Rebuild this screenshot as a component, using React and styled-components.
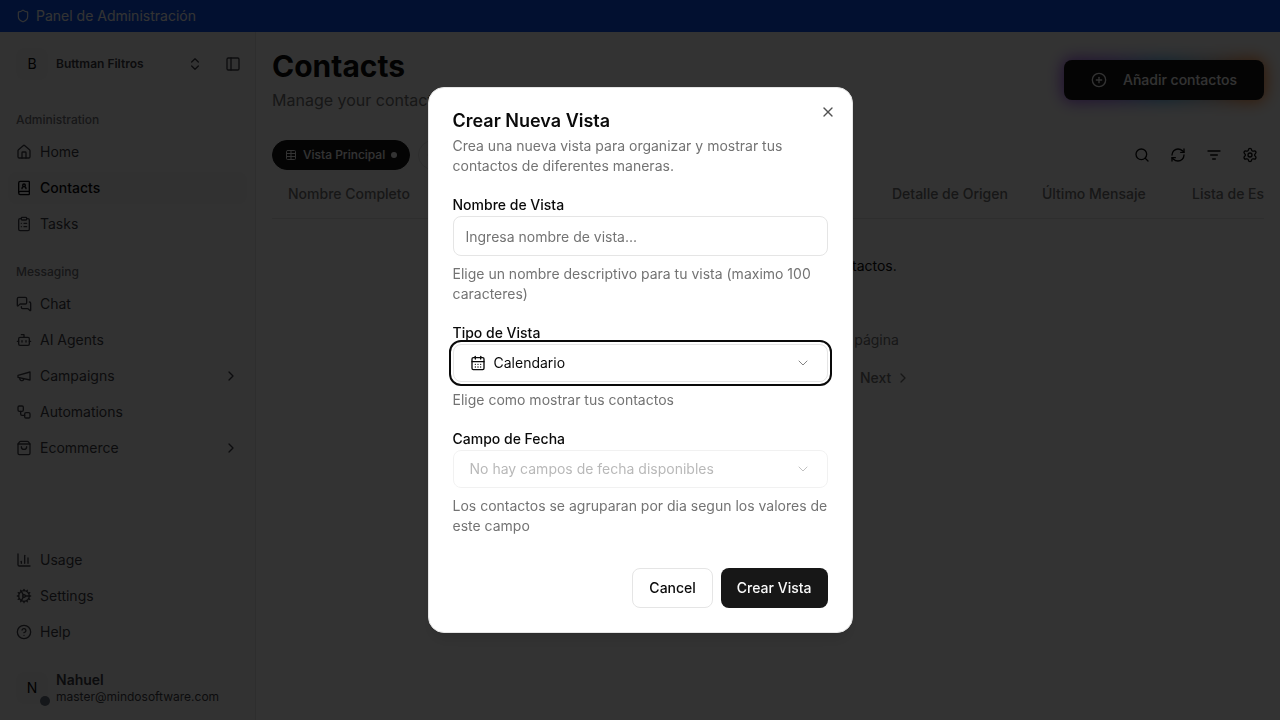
import React from "react";
import styled, { createGlobalStyle } from "styled-components";
import {
  Shield, ChevronsUpDown, PanelLeft, House, BookUser, ClipboardList, MessagesSquare, Bot,
  Workflow, ShoppingBag, ChevronRight, ChevronLeft, ChevronDown, ChartColumn, Cog,
  CircleHelp, CirclePlus, Table as TableIcon, Plus, Search, RefreshCw, Settings, CalendarDays, X,
} from "lucide-react";

const GlobalStyle = createGlobalStyle`
  *, *::before, *::after { box-sizing: border-box; }
  body { margin: 0; background: #fff; color: #0a0a0a; }
  body, button, input, select { font-family: Inter, "Liberation Sans", sans-serif; font-size: 14px; line-height: 20px; }
  h1, h2, p { margin: 0; }
  button { border: 0; background: none; padding: 0; color: inherit; cursor: pointer; }
  a { color: inherit; text-decoration: none; }
  svg { flex: none; display: block; }
`;

const Page = styled.div`
  display: flex;
  flex-direction: column;
  height: 100vh;
  overflow: hidden;
`;

const Banner = styled.header`
  display: flex;
  align-items: center;
  gap: 6px;
  flex: none;
  height: 32px;
  padding: 0 16px;
  background: #0a52f0;
  color: #fff;
`;

const Body = styled.div`
  display: flex;
  flex: 1;
  min-height: 0;
`;

const Sidebar = styled.aside`
  display: flex;
  flex-direction: column;
  flex: none;
  width: 256px;
  background: #fafafa;
  border-right: 1px solid #e5e5e5;
  color: #3f3f46;
`;

const AccountRow = styled.div`
  display: flex;
  align-items: center;
  gap: 8px;
  padding: 8px;
`;

const AccountButton = styled.button`
  display: flex;
  align-items: center;
  gap: 8px;
  flex: 1;
  min-width: 0;
  height: 48px;
  padding: 8px;
  text-align: left;
`;

const Avatar = styled.span`
  position: relative;
  display: flex;
  align-items: center;
  justify-content: center;
  flex: none;
  width: 32px;
  height: 32px;
  border-radius: 8px;
  background: #f5f5f5;
  color: #0a0a0a;
`;

const StatusDot = styled.span`
  position: absolute;
  right: -2px;
  bottom: -2px;
  width: 10px;
  height: 10px;
  border-radius: 50%;
  background: #6a7282;
`;

const AccountName = styled.span`
  flex: 1;
  font-size: 12px;
  font-weight: 600;
`;

const PanelToggle = styled.button`
  display: flex;
  align-items: center;
  justify-content: center;
  width: 28px;
  height: 28px;
`;

const UserText = styled.span`
  display: flex;
  flex-direction: column;
  min-width: 0;
`;

const UserName = styled.span`
  font-weight: 600;
  line-height: 18px;
`;

const UserMail = styled.span`
  font-size: 12px;
  line-height: 16px;
`;

const NavGroup = styled.nav`
  display: flex;
  flex-direction: column;
  gap: 4px;
  padding: 8px;
  margin-top: ${(p) => (p.$last ? "auto" : "0")};
`;

const NavLabel = styled.div`
  height: 28px;
  padding: 0 8px;
  font-size: 12px;
  font-weight: 500;
  line-height: 32px;
  color: #737378;
`;

const NavItem = styled.a`
  display: flex;
  align-items: center;
  gap: 8px;
  height: 32px;
  padding: 0 8px;
  border-radius: 8px;
  background: ${(p) => (p.$active ? "#f4f4f5" : "transparent")};
  color: ${(p) => (p.$active ? "#09090b" : "inherit")};
  font-weight: ${(p) => (p.$active ? 500 : 400)};
`;

const NavText = styled.span`
  flex: 1;
`;

const Main = styled.main`
  flex: 1;
  min-width: 0;
  padding: 16px;
  overflow: hidden;
`;

const PageHead = styled.div`
  display: flex;
  align-items: center;
  justify-content: space-between;
`;

const PageTitle = styled.h1`
  font-size: 30px;
  font-weight: 700;
  line-height: 36px;
`;

const PageSubtitle = styled.p`
  margin-top: 4px;
  font-size: 16px;
  line-height: 24px;
  color: #737373;
`;

const AddWrap = styled.div`
  position: relative;
  isolation: isolate;

  &::before {
    content: "";
    position: absolute;
    inset: -2px;
    z-index: -1;
    border-radius: 10px;
    background: linear-gradient(90deg, #9333ea, #8b5cf6 25%, #38a5e8 50%, #a3a3a8 72%, #f97316 92%);
    filter: blur(8px);
    opacity: 0.9;
  }
`;

const AddButton = styled.button`
  display: flex;
  align-items: center;
  justify-content: center;
  gap: 16px;
  min-width: 200px;
  height: 40px;
  padding: 0 24px;
  border-radius: 8px;
  background: #171717;
  color: #fff;
  font-weight: 500;
`;

const Toolbar = styled.div`
  display: flex;
  align-items: center;
  justify-content: space-between;
  margin-top: 28px;
`;

const ViewTabs = styled.div`
  display: flex;
  gap: 8px;
`;

const ViewTab = styled.button`
  display: flex;
  align-items: center;
  gap: 6px;
  height: 30px;
  padding: 0 12px;
  border: 1px solid #171717;
  border-radius: 15px;
  background: #171717;
  color: #fff;
  font-size: 12px;
  font-weight: 500;
`;

const AddTab = styled.button`
  display: flex;
  align-items: center;
  justify-content: center;
  width: 30px;
  height: 30px;
  border: 1px solid #e5e5e5;
  border-radius: 15px;
  color: #737373;
`;

const TabDot = styled.span`
  width: 6px;
  height: 6px;
  border-radius: 50%;
  background: #fff;
`;

const ToolButtons = styled.div`
  display: flex;
  gap: 8px;
`;

const ToolButton = styled.button`
  display: flex;
  align-items: center;
  justify-content: center;
  width: 28px;
  height: 28px;
`;

const TableScroll = styled.div`
  overflow: hidden;
`;

const ContactTable = styled.table`
  width: 1054px;
  table-layout: fixed;
  border-collapse: separate;
  border-spacing: 0;
`;

const HeadCell = styled.th`
  width: ${(p) => (p.$first ? "154px" : "150px")};
  height: 49px;
  padding: 0 0 0 16px;
  border-bottom: 1px solid #e5e5e5;
  color: #737373;
  font-weight: 500;
  text-align: left;
  white-space: nowrap;
`;

const EmptyState = styled.p`
  padding: 37px 0;
  text-align: center;
`;

const PageCount = styled.p`
  margin-top: 17px;
  text-align: center;
  color: #737373;
`;

const Pager = styled.nav`
  display: flex;
  justify-content: center;
  gap: 16px;
  margin-top: 10px;
  color: #737373;
`;

const PagerButton = styled.button`
  display: flex;
  align-items: center;
  gap: 4px;
  height: 36px;
  padding: 0 10px;
  font-weight: 500;
`;

const Overlay = styled.div`
  position: fixed;
  inset: 0;
  display: flex;
  align-items: center;
  justify-content: center;
  background: rgba(0, 0, 0, 0.8);
`;

const Dialog = styled.div`
  position: relative;
  width: 100%;
  max-width: 425px;
  padding: 24px;
  border: 1px solid #e5e5e5;
  border-radius: 16px;
  background: #fff;
  box-shadow: 0 10px 15px -3px rgba(0, 0, 0, 0.1), 0 4px 6px -4px rgba(0, 0, 0, 0.1);
`;

const CloseButton = styled.button`
  position: absolute;
  top: 16px;
  right: 16px;
  opacity: 0.7;
`;

const DialogTitle = styled.h2`
  font-size: 18px;
  font-weight: 600;
  line-height: 18px;
`;

const Muted = styled.p`
  margin-top: ${(p) => (p.$tight ? "6px" : "8px")};
  color: #737373;
`;

const Field = styled.div`
  margin-top: 18px;
`;

const FieldLabel = styled.label`
  display: block;
  font-weight: 500;
  line-height: 22px;
`;

const TextInput = styled.input`
  display: block;
  width: 100%;
  height: 40px;
  padding: 0 12px;
  border: 1px solid #e5e5e5;
  border-radius: 8px;
  background: #fff;
  color: #0a0a0a;

  &::placeholder { color: #737373; opacity: 1; }
`;

const SelectBox = styled.div`
  display: flex;
  align-items: center;
  gap: 8px;
  height: 38px;
  padding: 0 16px;
  border: 1px solid #e5e5e5;
  border-radius: 8px;
  outline: ${(p) => (p.$focused ? "2px solid #0a0a0a" : "none")};
  outline-offset: 2px;
  opacity: ${(p) => (p.$disabled ? 0.5 : 1)};
`;

const Select = styled.select`
  flex: 1;
  min-width: 0;
  height: 36px;
  padding: 0;
  border: 0;
  outline: 0;
  appearance: none;
  background: transparent;
  color: ${(p) => (p.disabled ? "#737373" : "#0a0a0a")};
  opacity: 1;
`;

const SelectArrow = styled(ChevronDown)`
  opacity: 0.5;
  pointer-events: none;
`;

const DialogFooter = styled.div`
  display: flex;
  justify-content: flex-end;
  gap: 8px;
  margin-top: 32px;
`;

const DialogButton = styled.button`
  height: 40px;
  padding: 0 16px;
  border: ${(p) => (p.$primary ? "0" : "1px solid #e5e5e5")};
  border-radius: 8px;
  background: ${(p) => (p.$primary ? "#171717" : "#fff")};
  color: ${(p) => (p.$primary ? "#fafafa" : "#0a0a0a")};
  font-weight: 500;
`;

const FilterLines = () => (
  <svg width="16" height="16" viewBox="0 0 24 24" fill="none" stroke="currentColor" strokeWidth="2" strokeLinecap="round">
    <path d="M3 6h18M7 12h10M10 18h4" />
  </svg>
);

const Megaphone = () => (
  <svg width="16" height="16" viewBox="0 0 24 24" fill="none" stroke="currentColor" strokeWidth="2" strokeLinecap="round" strokeLinejoin="round">
    <path d="m3 11 18-5v12L3 14v-3z" />
    <path d="M11.6 16.8a3 3 0 1 1-5.8-1.6" />
  </svg>
);

const groups = [
  {
    label: "Administration",
    items: [
      { text: "Home", Icon: House },
      { text: "Contacts", Icon: BookUser, active: true },
      { text: "Tasks", Icon: ClipboardList },
    ],
  },
  {
    label: "Messaging",
    items: [
      { text: "Chat", Icon: MessagesSquare },
      { text: "AI Agents", Icon: Bot },
      { text: "Campaigns", Icon: Megaphone, more: true },
      { text: "Automations", Icon: Workflow },
      { text: "Ecommerce", Icon: ShoppingBag, more: true },
    ],
  },
  {
    items: [
      { text: "Usage", Icon: ChartColumn },
      { text: "Settings", Icon: Cog },
      { text: "Help", Icon: CircleHelp },
    ],
  },
];

const columns = ["Nombre Completo", "Teléfono", "Email", "Origen", "Detalle de Origen", "Último Mensaje", "Lista de Estados"];

const tools = [
  { name: "Buscar", Icon: Search },
  { name: "Actualizar", Icon: RefreshCw },
  { name: "Filtrar", Icon: FilterLines },
  { name: "Configurar", Icon: Settings },
];

export default function App() {
  return (
    <>
      <GlobalStyle />
      <Page>
        <Banner>
          <Shield size={14} />
          Panel de Administración
        </Banner>
        <Body>
          <Sidebar>
            <AccountRow>
              <AccountButton>
                <Avatar>B</Avatar>
                <AccountName>Buttman Filtros</AccountName>
                <ChevronsUpDown size={16} />
              </AccountButton>
              <PanelToggle aria-label="Toggle sidebar"><PanelLeft size={16} /></PanelToggle>
            </AccountRow>
            {groups.map((group, i) => (
              <NavGroup key={i} $last={!group.label}>
                {group.label && <NavLabel>{group.label}</NavLabel>}
                {group.items.map(({ text, Icon, active, more }) => (
                  <NavItem key={text} href="#" $active={active}>
                    <Icon size={16} />
                    <NavText>{text}</NavText>
                    {more && <ChevronRight size={16} />}
                  </NavItem>
                ))}
              </NavGroup>
            ))}
            <AccountRow>
              <AccountButton>
                <Avatar>N<StatusDot /></Avatar>
                <UserText>
                  <UserName>Nahuel</UserName>
                  <UserMail>master@mindosoftware.com</UserMail>
                </UserText>
              </AccountButton>
            </AccountRow>
          </Sidebar>
          <Main>
            <PageHead>
              <div>
                <PageTitle>Contacts</PageTitle>
                <PageSubtitle>Manage your contacts</PageSubtitle>
              </div>
              <AddWrap>
                <AddButton><CirclePlus size={16} />Añadir contactos</AddButton>
              </AddWrap>
            </PageHead>
            <Toolbar>
              <ViewTabs>
                <ViewTab><TableIcon size={12} />Vista Principal<TabDot /></ViewTab>
                <AddTab aria-label="Nueva vista"><Plus size={16} /></AddTab>
              </ViewTabs>
              <ToolButtons>
                {tools.map(({ name, Icon }) => (
                  <ToolButton key={name} aria-label={name}><Icon size={16} /></ToolButton>
                ))}
              </ToolButtons>
            </Toolbar>
            <TableScroll>
              <ContactTable>
                <thead>
                  <tr>{columns.map((c, i) => <HeadCell key={c} $first={i === 0}>{c}</HeadCell>)}</tr>
                </thead>
              </ContactTable>
            </TableScroll>
            <EmptyState>No se han encontrado otros contactos.</EmptyState>
            <PageCount>Mostrando 0 de 0 contactos por página</PageCount>
            <Pager>
              <PagerButton><ChevronLeft size={16} />Previous</PagerButton>
              <PagerButton>Página 1 de 1</PagerButton>
              <PagerButton>Next<ChevronRight size={16} /></PagerButton>
            </Pager>
          </Main>
        </Body>
      </Page>
      <Overlay>
        <Dialog role="dialog" aria-modal="true" aria-labelledby="dialog-title">
          <DialogTitle id="dialog-title">Crear Nueva Vista</DialogTitle>
          <Muted $tight>Crea una nueva vista para organizar y mostrar tus contactos de diferentes maneras.</Muted>
          <Field>
            <FieldLabel htmlFor="view-name">Nombre de Vista</FieldLabel>
            <TextInput id="view-name" placeholder="Ingresa nombre de vista..." maxLength={100} />
            <Muted>Elige un nombre descriptivo para tu vista (maximo 100 caracteres)</Muted>
          </Field>
          <Field>
            <FieldLabel htmlFor="view-type">Tipo de Vista</FieldLabel>
            <SelectBox $focused>
              <CalendarDays size={16} />
              <Select id="view-type"><option>Calendario</option></Select>
              <SelectArrow size={16} strokeWidth={1.5} />
            </SelectBox>
            <Muted>Elige como mostrar tus contactos</Muted>
          </Field>
          <Field>
            <FieldLabel htmlFor="date-field">Campo de Fecha</FieldLabel>
            <SelectBox $disabled>
              <Select id="date-field" disabled><option>No hay campos de fecha disponibles</option></Select>
              <SelectArrow size={16} strokeWidth={1.5} />
            </SelectBox>
            <Muted>Los contactos se agruparan por dia segun los valores de este campo</Muted>
          </Field>
          <DialogFooter>
            <DialogButton>Cancel</DialogButton>
            <DialogButton $primary>Crear Vista</DialogButton>
          </DialogFooter>
          <CloseButton aria-label="Close"><X size={16} /></CloseButton>
        </Dialog>
      </Overlay>
    </>
  );
}
